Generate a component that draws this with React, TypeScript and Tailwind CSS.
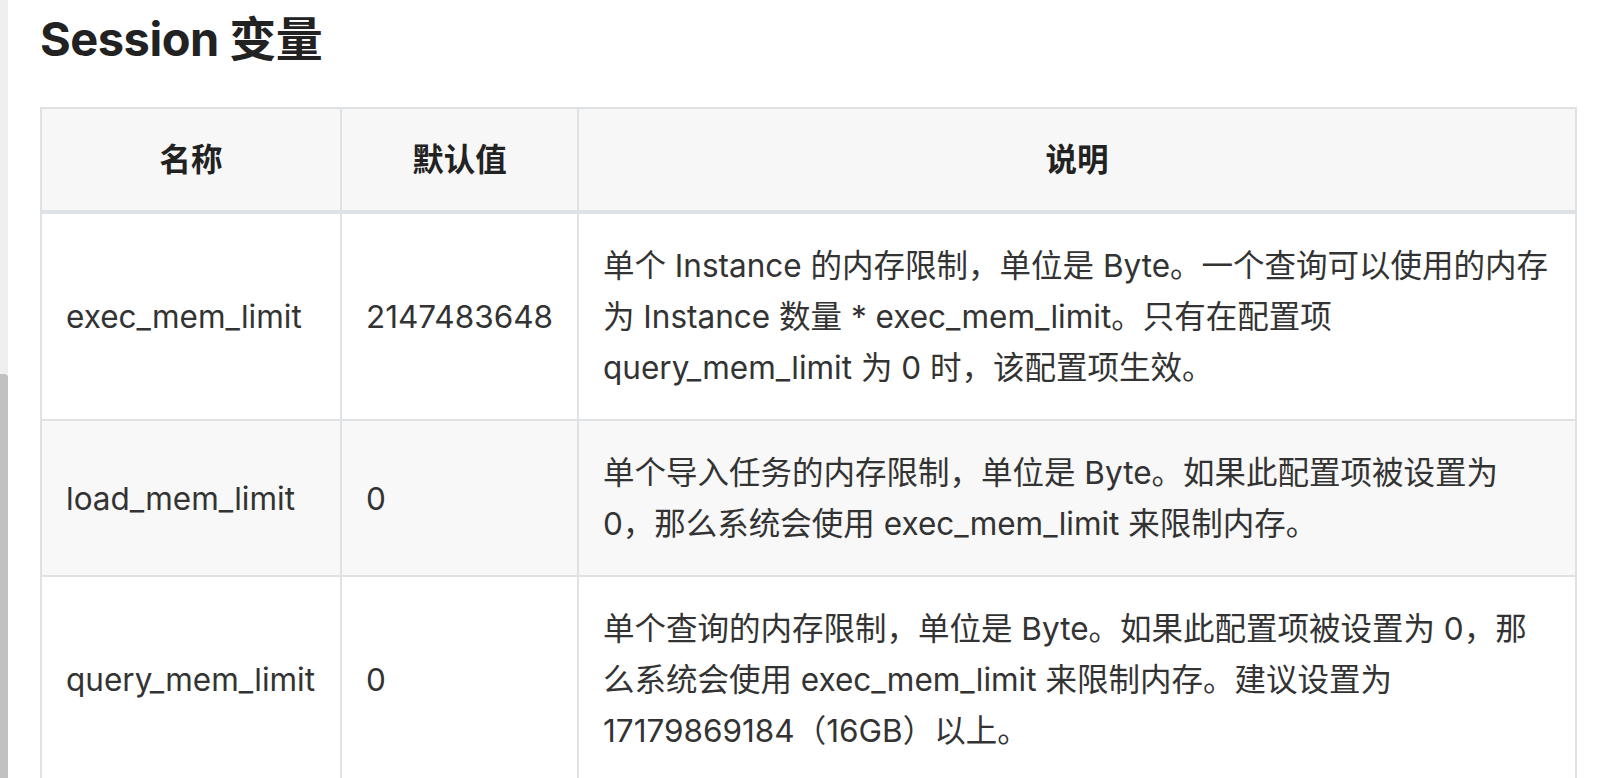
const rows = [
  {
    name: "exec_mem_limit",
    value: "2147483648",
    desc: [
      "单个 Instance 的内存限制，单位是 Byte。一个查询可以使用的内存",
      "为 Instance 数量 * exec_mem_limit。只有在配置项",
      "query_mem_limit 为 0 时，该配置项生效。",
    ],
  },
  {
    name: "load_mem_limit",
    value: "0",
    desc: [
      "单个导入任务的内存限制，单位是 Byte。如果此配置项被设置为",
      "0，那么系统会使用 exec_mem_limit 来限制内存。",
    ],
  },
  {
    name: "query_mem_limit",
    value: "0",
    desc: [
      "单个查询的内存限制，单位是 Byte。如果此配置项被设置为 0，那",
      "么系统会使用 exec_mem_limit 来限制内存。建议设置为",
      "17179869184（16GB）以上。",
    ],
  },
];

export default function App() {
  return (
    <div
      className="flex h-[778px] w-full overflow-hidden bg-white text-[#333]"
      style={{ fontFamily: 'Inter, "Noto Sans CJK SC", sans-serif' }}
    >
      {/* scrollbar gutter */}
      <div className="flex w-[8px] shrink-0 flex-col bg-[#efefef]">
        <div className="mt-[374px] flex-1 rounded-tr-[4px] bg-[#c1c1c1]" />
      </div>

      <div className="flex-1 pl-[32px] pr-[38px]">
        <h2 className="mt-[10px] text-[47px] font-bold leading-[58px] tracking-[-0.5px] text-[#222]">
          Session 变量
        </h2>

        <table className="mt-[39px] w-[1537px] table-fixed border-collapse text-[31.5px] leading-[51px]">
          <colgroup>
            <col className="w-[300px]" />
            <col className="w-[237px]" />
            <col />
          </colgroup>
          <thead>
            <tr className="bg-[#f7f7f7]">
              <th className="border-2 border-b-4 border-[#dfe2e5] px-[24px] py-[25px] text-center font-semibold text-[#222]">
                名称
              </th>
              <th className="border-2 border-b-4 border-[#dfe2e5] px-[24px] py-[25px] text-center font-semibold text-[#222]">
                默认值
              </th>
              <th className="border-2 border-b-4 border-[#dfe2e5] px-[24px] py-[25px] text-center font-semibold text-[#222]">
                说明
              </th>
            </tr>
          </thead>
          <tbody>
            {rows.map((r, i) => (
              <tr key={r.name} className={i % 2 === 1 ? "bg-[#f8f8f8]" : "bg-white"}>
                <td className="border-2 border-[#dfe2e5] px-[24px] py-[26px] align-middle">
                  {r.name}
                </td>
                <td className="border-2 border-[#dfe2e5] px-[24px] py-[26px] align-middle">
                  {r.value}
                </td>
                <td className="border-2 border-[#dfe2e5] px-[24px] py-[26px] align-middle whitespace-nowrap">
                  {r.desc.map((line, j) => (
                    <div key={j}>{line}</div>
                  ))}
                </td>
              </tr>
            ))}
          </tbody>
        </table>
      </div>
    </div>
  );
}
